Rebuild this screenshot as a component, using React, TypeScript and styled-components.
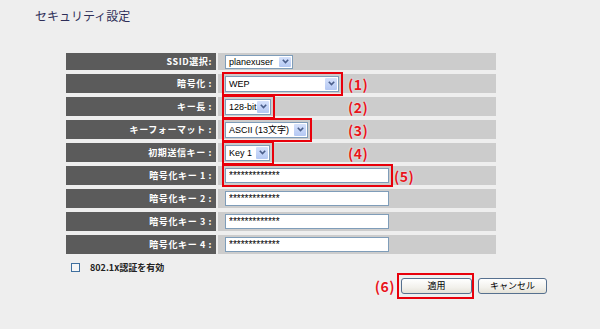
import React from 'react';
import styled, { createGlobalStyle } from 'styled-components';

const GlobalStyle = createGlobalStyle`
  html, body {
    margin: 0;
    padding: 0;
    background: #eeeeee;
  }
  body {
    font-family: 'Liberation Sans', 'Noto Sans CJK JP', sans-serif;
  }
`;

const Page = styled.div`
  width: 600px;
  height: 329px;
  padding-top: 8px;
  box-sizing: border-box;
  background: #eeeeee;
`;

const Title = styled.h1`
  margin: 0 0 0 35px;
  height: 16px;
  font-family: 'Noto Sans CJK JP', sans-serif;
  font-size: 12px;
  line-height: 16px;
  font-weight: 400;
  color: #2e2e58;
`;

const Form = styled.div`
  margin: 29px 0 0 66px;
  width: 481px;
`;

const Table = styled.div`
  display: flex;
  flex-direction: column;
  gap: 4px;
  width: 430px;
`;

const Row = styled.div<{ $h: number }>`
  display: grid;
  grid-template-columns: 150px 278px;
  grid-template-rows: minmax(0, 1fr);
  column-gap: 2px;
  height: ${(p) => p.$h}px;
`;

const LabelCell = styled.div`
  display: flex;
  align-items: center;
  justify-content: flex-end;
  padding-right: 4px;
  background: #5b5b5b;
  color: #ffffff;
  font-family: 'Noto Sans CJK JP', sans-serif;
  font-size: 9px;
  font-weight: 700;
  letter-spacing: 0.6px;
  white-space: pre;
`;

const ValueCell = styled.div`
  display: flex;
  align-items: center;
  padding-left: 4px;
  background: #cccccc;
`;

const SlotArea = styled.div`
  display: flex;
  align-items: center;
  min-width: 125px;
`;

const Mark = styled.div<{ $on: boolean }>`
  display: flex;
  align-items: center;
  border: 2px solid ${(p) => (p.$on ? '#e8000b' : 'transparent')};
  padding: 2px 2px 2px 1px;
`;

const Note = styled.span`
  margin-left: 1px;
  font-family: 'Noto Sans CJK JP', sans-serif;
  font-size: 14px;
  font-weight: 700;
  line-height: 16px;
  letter-spacing: 0.5px;
  color: #e8141b;
  text-shadow: 0 0 2px #ffffff;
`;

const FakeSelect = styled.div<{ $w: number; $h: number }>`
  display: flex;
  align-items: center;
  box-sizing: border-box;
  width: ${(p) => p.$w}px;
  height: ${(p) => p.$h}px;
  border: 1px solid #7f9db9;
  background: #ffffff;
  padding-left: 3px;
  font-size: 9px;
  color: #000000;
`;

const SelectText = styled.span`
  flex: 1;
  white-space: nowrap;
  font-family: 'Liberation Sans', 'Noto Sans CJK JP', sans-serif;
`;

const Arrow = styled.span`
  display: flex;
  align-items: center;
  justify-content: center;
  width: 12px;
  height: calc(100% - 2px);
  margin-right: 1px;
  background: linear-gradient(#d5e1fb, #b4c8f3);
  border-radius: 1px;
`;

const KeyInput = styled.input`
  box-sizing: border-box;
  width: 164px;
  height: 15px;
  border: 1px solid #7f9db9;
  background: #ffffff;
  padding: 0 3px;
  font-family: 'Liberation Sans', sans-serif;
  font-size: 10px;
  color: #000000;
  outline: none;
`;

const OptionRow = styled.label`
  display: flex;
  align-items: center;
  height: 12px;
  margin-top: 7px;
  padding-left: 5px;
  font-family: 'Noto Sans CJK JP', sans-serif;
  font-size: 9px;
  font-weight: 700;
  color: #222222;
`;

const Check = styled.span`
  box-sizing: border-box;
  width: 9px;
  height: 9px;
  margin-right: 10px;
  border: 1px solid #3f6f9e;
  background: #f6f6f6;
`;

const Actions = styled.div`
  display: flex;
  align-items: center;
  justify-content: flex-end;
`;

const ActionNote = styled(Note)`
  margin: 0 2px 0 0;
`;

const ButtonMark = styled.div`
  display: flex;
  border: 2px solid #e8000b;
  padding: 3px 0 3px 2px;
`;

const Button = styled.button<{ $w: number }>`
  box-sizing: border-box;
  width: ${(p) => p.$w}px;
  height: 16px;
  margin-left: 4px;
  padding: 0;
  border: 1px solid #56708f;
  border-radius: 3px;
  background: linear-gradient(#ffffff, #f2f1ec 60%, #e4e2d8);
  font-family: 'Noto Sans CJK JP', sans-serif;
  font-size: 9px;
  color: #000000;
  line-height: 14px;
  ${ButtonMark} & {
    margin-left: 0;
  }
`;

const Chevron = () => (
  <svg width="7" height="5" viewBox="0 0 7 5">
    <polyline points="0.8,0.8 3.5,3.6 6.2,0.8" fill="none" stroke="#4a5e8a" strokeWidth="1.6" />
  </svg>
);

type Field =
  | { label: string; kind: 'select'; value: string; w: number; note?: string }
  | { label: string; kind: 'input'; note?: string };

const fields: Field[] = [
  { label: 'SSID選択:', kind: 'select', value: 'planexuser', w: 68 },
  { label: '暗号化 :', kind: 'select', value: 'WEP', w: 114, note: '(1)' },
  { label: 'キー長 :', kind: 'select', value: '128-bit', w: 46, note: '(2)' },
  { label: 'キーフォーマット :', kind: 'select', value: 'ASCII (13文字)', w: 83, note: '(3)' },
  { label: '初期送信キー :', kind: 'select', value: 'Key 1', w: 45, note: '(4)' },
  { label: '暗号化キー 1 :', kind: 'input', note: '(5)' },
  { label: '暗号化キー 2 :', kind: 'input' },
  { label: '暗号化キー 3 :', kind: 'input' },
  { label: '暗号化キー 4 :', kind: 'input' },
];

const App = () => {
  return (
    <Page>
      <GlobalStyle />
      <Title>セキュリティ設定</Title>
      <Form>
        <Table>
          {fields.map((f, i) => (
            <Row key={f.label} $h={i === 0 ? 17 : 19}>
              <LabelCell>{f.label}</LabelCell>
              <ValueCell>
                <SlotArea>
                  <Mark $on={!!f.note}>
                    {f.kind === 'select' ? (
                      <FakeSelect $w={f.w} $h={i === 0 ? 14 : 16}>
                        <SelectText>{f.value}</SelectText>
                        <Arrow>
                          <Chevron />
                        </Arrow>
                      </FakeSelect>
                    ) : (
                      <KeyInput type="text" readOnly value="*************" />
                    )}
                  </Mark>
                </SlotArea>
                {f.note && <Note>{f.note}</Note>}
              </ValueCell>
            </Row>
          ))}
        </Table>
        <OptionRow>
          <Check />
          802.1x認証を有効
        </OptionRow>
        <Actions>
          <ActionNote>(6)</ActionNote>
          <ButtonMark>
            <Button $w={71}>適用</Button>
          </ButtonMark>
          <Button $w={69}>キャンセル</Button>
        </Actions>
      </Form>
    </Page>
  );
};

export default App;
